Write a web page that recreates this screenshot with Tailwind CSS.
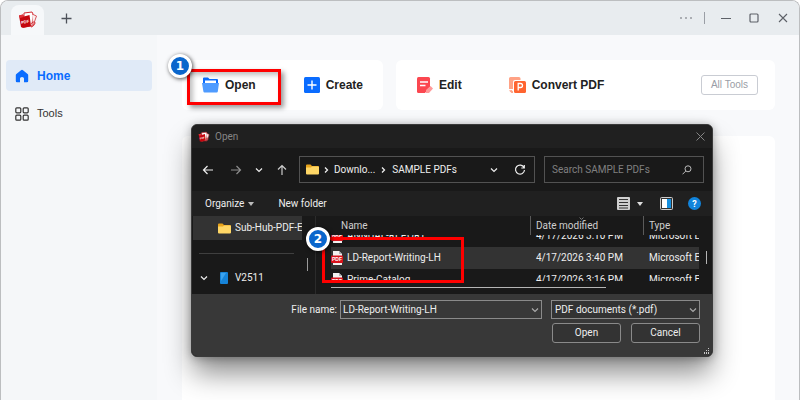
<!DOCTYPE html>
<html lang="en">
<head>
  <meta charset="UTF-8" />
  <meta name="viewport" content="width=device-width, initial-scale=1.0"/>
  <title>PDF Editor</title>
  <script src="https://cdn.jsdelivr.net/npm/@tailwindcss/browser@4"></script>
</head>
<body class="bg-white font-['Liberation_Sans',sans-serif] text-[#222]">
  <!-- shared icons -->
  <svg class="hidden">
    <symbol id="logo" viewBox="0 0 20 20">
      <path d="M6 3l8-1 1 2-1 12-8 1z" fill="#fff" stroke="#d22a31" stroke-width="1"/>
      <path d="M14 4l4.500 2-3.500 10" fill="#f8eeee" stroke="#dc555b" stroke-width="1"/>
      <path d="M1 5.500l4-1 1 2 5.500-1.500L13 16l-8 2L3 17z" fill="#c4070f"/>
      <path d="M1 5.500l4-1 .8 2.500-3.800 1z" fill="#e2343b"/>
      <path d="M13 14c1-2 4-3 4-1s-3 4-4 4" fill="none" stroke="#d22a31"/>
      <text x="3.500" y="14" font-size="4" font-weight="bold" fill="#fff" font-family="Liberation Sans" transform="rotate(-12 4 14)">PDF</text>
    </symbol>
    <symbol id="folder" viewBox="0 0 13 11">
      <path d="M0 1.500Q0 .5 1 .5h3.500l1.500 1.500h6q1 0 1 1V6H0z" fill="#e8a41c"/>
      <path d="M0 3.500h5l1-1h6q1 0 1 1v6q0 1-1 1H1q-1 0-1-1z" fill="#ffd766"/>
    </symbol>
    <symbol id="pdf" viewBox="0 0 12 14">
      <path d="M2 0h6l3 3v11H2z" fill="#f1f1f1"/>
      <path d="M8 0v3h3z" fill="#b5b5b5"/>
      <rect y="4.500" width="12" height="7.500" rx="1" fill="#d8121c"/>
      <text x="6" y="10.300" text-anchor="middle" font-size="5" font-weight="bold" fill="#fff" font-family="Liberation Sans">PDF</text>
    </symbol>
    <symbol id="chevron" viewBox="0 0 8 8"><path d="M1 2.500l3 3 3-3" fill="none" stroke="currentColor" stroke-width="1.200"/></symbol>
    <symbol id="chevron-right" viewBox="0 0 8 8"><path d="M3 1.500L5.500 4 3 6.500" fill="none" stroke="currentColor" stroke-width="1.300"/></symbol>
  </svg>

  <div class="relative min-h-screen overflow-hidden flex flex-col rounded-t-lg border border-b-0 border-[#bcbec0] bg-[#f8f9fb]">
    <header class="flex items-center h-[34px] pl-[10px] pr-[11px] bg-[#e8ecef]">
      <div class="self-end flex items-center justify-center w-[33px] h-[30px] rounded-t-lg bg-[#f6f8fa]">
        <svg class="w-5 h-5"><use href="#logo"/></svg>
      </div>
      <button aria-label="New tab" class="ml-[17px] text-[#4c5159]">
        <svg class="w-[11px] h-[11px]" viewBox="0 0 11 11"><path d="M5.500.5v10M.5 5.500h10" stroke="currentColor" stroke-width="1.300"/></svg>
      </button>
      <div class="ml-auto flex items-center text-[#5d6168]">
        <button aria-label="More"><svg class="w-3 h-3" viewBox="0 0 12 12" fill="currentColor"><circle cx="1" cy="6" r=".8"/><circle cx="6" cy="6" r=".8"/><circle cx="11" cy="6" r=".8"/></svg></button>
        <span class="w-px h-3 ml-3 mr-4 bg-[#9a9ea5]"></span>
        <button aria-label="Minimize"><svg class="w-[10px] h-[10px]" viewBox="0 0 10 10"><path d="M0 5.500h10" stroke="currentColor"/></svg></button>
        <button aria-label="Maximize" class="ml-[18px]"><svg class="w-[10px] h-[10px]" viewBox="0 0 10 10"><rect x="1" y="1" width="8" height="8" rx="1" fill="none" stroke="currentColor" stroke-width="1.200"/></svg></button>
        <button aria-label="Close" class="ml-[19px]"><svg class="w-[10px] h-[10px]" viewBox="0 0 10 10"><path d="M1 1l8 8M9 1l-8 8" stroke="currentColor" stroke-width="1.100"/></svg></button>
      </div>
    </header>

    <div class="flex flex-1">
      <nav class="w-[156px] shrink-0 pt-[25px] px-[5px] bg-[#f5f7f9]">
        <a href="#" class="flex items-center gap-2 h-[31px] px-[9px] rounded bg-[#e0eaf7] text-xs font-bold text-[#0a6cff]">
          <svg class="w-[14px] h-[14px]" viewBox="0 0 14 14"><path d="M7 .8q.5 0 1 .4l4.600 3.800q.6.500.6 1.300V12q0 1.200-1.200 1.200H9V9.500Q9 8 7 8T5 9.500v3.700H2Q.8 13.200.8 12V6.300q0-.8.6-1.300L6 1.200q.5-.4 1-.4z" fill="currentColor"/></svg>
          Home
        </a>
        <a href="#" class="flex items-center gap-2 h-[31px] mt-[7px] px-[9px] text-[11px] text-[#333]">
          <svg class="w-[14px] h-[14px]" viewBox="0 0 14 14" fill="none" stroke="currentColor" stroke-width="1.200"><rect x=".8" y=".8" width="5" height="5" rx="1"/><rect x="8.200" y=".8" width="5" height="5" rx="1"/><rect x=".8" y="8.200" width="5" height="5" rx="1"/><rect x="8.200" y="8.200" width="5" height="5" rx="1"/></svg>
          Tools
        </a>
      </nav>

      <main class="flex-1 flex flex-col pt-[25px] pl-[25px] pr-6">
        <div class="flex gap-[13px] h-[50px] text-xs font-bold">
          <section class="flex items-center w-[201px] px-5 rounded-md bg-white">
            <button class="flex items-center gap-[6px]">
              <svg class="w-[17px] h-[16px]" viewBox="0 0 17 16"><path d="M1 1.500Q1 .5 2 .5h4l1.500 1.500H15q1 0 1 1V8H1z" fill="#0a6cff"/><path d="M3 3.500h11v3H3z" fill="#fff"/><path d="M0 6h17l-1.200 8.500q-.1 1-1.100 1H2.500q-1 0-1.100-1z" fill="#4f9bff"/></svg>
              Open
            </button>
            <button class="flex items-center gap-[6px] ml-12">
              <svg class="w-4 h-4" viewBox="0 0 16 16"><rect width="16" height="16" rx="1.500" fill="#0a6cff"/><path d="M8 3.500v9M3.500 8h9" stroke="#fff" stroke-width="1.400"/></svg>
              Create
            </button>
          </section>
          <section class="flex-1 flex items-center pl-[21px] pr-[17px] rounded-md bg-white">
            <button class="flex items-center gap-[6px]">
              <svg class="w-4 h-4" viewBox="0 0 16 16"><path d="M0 1.500Q0 0 1.500 0h10Q13 0 13 1.500V10l-5 6H1.500Q0 16 0 14.500z" fill="#fb4750"/><path d="M3 5h8M3 8.500h5.500" stroke="#fff" stroke-width="1.300"/><path d="M9 13l4.500-4L16 11.500 12 16H9z" fill="#ff9a9a"/></svg>
              Edit
            </button>
            <button class="flex items-center gap-[6px] ml-[47px]">
              <svg class="w-[17px] h-4" viewBox="0 0 17 16"><path d="M0 1.500Q0 0 1.500 0H10q1.500 0 1.500 1.500V3H6Q4 3 4 5v7H0zM0 13.500L2.500 16H4v-1.500L2.500 13z" fill="#ffa285"/><rect x="5" y="4" width="12" height="12" rx="1.500" fill="#ff6430"/><path d="M9.200 13.500v-7h2.300q2 0 2 2t-2 2H9.200" fill="none" stroke="#fff" stroke-width="1.300"/></svg>
              Convert PDF
            </button>
            <button class="ml-auto h-5 px-[9px] rounded-[3px] border border-[#c9ccd3] text-[10px] font-normal text-[#9a9da6]">All Tools</button>
          </section>
        </div>
        <section class="flex-1 mt-[26px] rounded-t-md bg-white"></section>
      </main>
    </div>

    <!-- file picker -->
    <div role="dialog" aria-label="Open" class="absolute left-[190px] top-[123px] w-[522px] rounded-md overflow-hidden border border-[#3a3a3a] bg-[#191919] font-[Roboto,'Open_Sans',sans-serif] text-[10px] leading-4 text-[#eee] shadow-[0_18px_28px_-2px_rgba(0,0,0,0.45),0_1px_10px_rgba(0,0,0,0.3)]">
      <div class="flex items-center h-[23px] pl-[6px] pr-[7px] gap-[5px] bg-[#202020] text-[#858585]">
        <svg class="w-3 h-3"><use href="#logo"/></svg>
        <span>Open</span>
        <button aria-label="Close dialog" class="ml-auto"><svg class="w-[9px] h-[9px]" viewBox="0 0 9 9"><path d="M.5.5l8 8M8.500.5l-8 8" stroke="currentColor"/></svg></button>
      </div>

      <div class="flex items-center h-[43px] pl-[10px] pr-2">
        <button aria-label="Back"><svg class="w-3 h-3" viewBox="0 0 12 12"><path d="M11 6H1.500M5.500 2l-4 4 4 4" fill="none" stroke="#eee" stroke-width="1.200"/></svg></button>
        <button aria-label="Forward" class="ml-4"><svg class="w-3 h-3" viewBox="0 0 12 12"><path d="M1 6h9.500M6.500 2l4 4-4 4" fill="none" stroke="#8d8d8d" stroke-width="1.200"/></svg></button>
        <button aria-label="Recent locations" class="ml-[13px]"><svg class="w-2 h-2"><use href="#chevron"/></svg></button>
        <button aria-label="Up" class="ml-[13px]"><svg class="w-3 h-3" viewBox="0 0 12 12"><path d="M6 11V1.500M2 5.500l4-4 4 4" fill="none" stroke="#ccc" stroke-width="1.200"/></svg></button>
        <div class="flex items-center shrink-0 w-[236px] h-[27px] ml-[11px] pl-[6px] pr-2 border border-[#525252]">
          <svg class="w-[13px] h-[11px]"><use href="#folder"/></svg>
          <svg class="w-2 h-2 ml-[3px]"><use href="#chevron-right"/></svg>
          <span class="ml-1">Downlo...</span>
          <svg class="w-2 h-2 ml-1"><use href="#chevron-right"/></svg>
          <span class="ml-[5px]">SAMPLE PDFs</span>
          <button aria-label="Previous locations" class="ml-auto"><svg class="w-2 h-2"><use href="#chevron"/></svg></button>
          <button aria-label="Refresh" class="ml-4"><svg class="w-3 h-3" viewBox="0 0 12 12" fill="none" stroke="currentColor" stroke-width="1.200"><path d="M10 3.500A4.500 4.500 0 1 0 10.500 6M10.300 1v3H7.300"/></svg></button>
        </div>
        <label class="flex items-center flex-1 min-w-0 h-[27px] ml-[9px] pl-[7px] pr-[11px] border border-[#525252]">
          <input type="search" aria-label="Search" placeholder="Search SAMPLE PDFs" class="flex-1 min-w-0 bg-transparent outline-none placeholder:text-[#808080]"/>
          <svg class="w-[10px] h-[10px]" viewBox="0 0 10 10" fill="none" stroke="#bbb"><circle cx="6" cy="3.800" r="3"/><path d="M3.800 6L.5 9.300"/></svg>
        </label>
      </div>

      <div class="flex items-center h-[25px] pl-[13px] pr-[11px] bg-[#202020]">
        <button class="flex items-center gap-1">Organize <svg class="w-[6px] h-[4px]" viewBox="0 0 6 4"><path d="M0 0h6L3 4z" fill="#bbb"/></svg></button>
        <button class="ml-6">New folder</button>
        <button aria-label="View" class="ml-auto flex items-center gap-[7px]">
          <svg class="w-[13px] h-[13px]" viewBox="0 0 13 13"><rect width="13" height="13" rx="1" fill="#cfcfcf"/><path d="M2 2.500h9M2 5.500h9M2 8.500h9M2 11h9" stroke="#333"/></svg>
          <svg class="w-[6px] h-[4px]" viewBox="0 0 6 4"><path d="M0 0h6L3 4z" fill="#ddd"/></svg>
        </button>
        <button aria-label="Preview pane" class="ml-[17px]"><svg class="w-[13px] h-[13px]" viewBox="0 0 13 13"><rect x=".5" y=".5" width="12" height="12" rx="1" fill="#333" stroke="#ccc"/><path d="M2 2h5v9H2z" fill="#fff"/><path d="M7 2h4v9H7z" fill="#1590e0"/></svg></button>
        <button aria-label="Help" class="ml-[15px]"><svg class="w-[13px] h-[13px]" viewBox="0 0 13 13"><circle cx="6.500" cy="6.500" r="6.500" fill="#1184dc"/><text x="6.500" y="10" text-anchor="middle" font-size="9" font-weight="bold" fill="#fff">?</text></svg></button>
      </div>

      <div class="flex h-[78px]">
        <div class="flex w-[124px] pl-px border-r border-[#2b2b2b]">
          <div class="w-[109px]">
            <div class="flex items-center gap-1 h-6 pl-[25px] overflow-hidden whitespace-nowrap bg-[#333]">
              <svg class="w-[13px] h-[11px] shrink-0"><use href="#folder"/></svg>
              <span>Sub-Hub-PDF-E</span>
            </div>
            <div class="h-px mt-[13px] ml-[6px] mr-2 bg-[#3f3f3f]"></div>
            <div class="flex items-center h-6 mt-3 pl-[7px]">
              <svg class="w-2 h-2"><use href="#chevron"/></svg>
              <svg class="w-2 h-3 ml-3" viewBox="0 0 8 12"><rect width="8" height="12" rx="1" fill="#1683d8"/><path d="M1 1h5L1 9z" fill="#3aa2ee"/></svg>
              <span class="ml-[7px]">V2511</span>
            </div>
          </div>
          <div class="w-px h-[13px] mt-[42px] ml-[5px] bg-[#9a9a9a]"></div>
        </div>

        <div class="flex-1 min-w-0 pl-[15px]">
          <div class="flex">
            <table class="block w-[368px] text-left whitespace-nowrap">
              <thead class="block text-[#cfcfcf]">
                <tr class="grid grid-cols-[199px_113px_1fr] h-[19px]">
                  <th class="pl-[10px] pt-[2px] font-normal">Name</th>
                  <th class="relative pl-[5px] pt-[2px] border-l border-[#5a5a5a] font-normal">Date modified
                    <svg class="absolute left-[47px] top-0 w-[7px] h-[5px] text-[#999]"><use href="#chevron"/></svg>
                  </th>
                  <th class="pl-[5px] pt-[2px] border-l border-[#5a5a5a] font-normal">Type</th>
                </tr>
              </thead>
              <!-- list is scrolled halfway between rows -->
              <tbody class="flex flex-col justify-center h-[46px] overflow-hidden">
                <tr class="grid grid-cols-[199px_113px_1fr] items-center shrink-0 h-[22px]">
                  <td class="flex items-center gap-1"><svg class="w-3 h-[14px]"><use href="#pdf"/></svg>ANNUAL-REPORT</td>
                  <td class="pl-[6px]">4/17/2026 3:10 PM</td>
                  <td class="pl-[6px] overflow-hidden">Microsoft Ec</td>
                </tr>
                <tr class="grid grid-cols-[199px_113px_1fr] items-center shrink-0 h-[22px] bg-[#333]">
                  <td class="flex items-center gap-1"><svg class="w-3 h-[14px]"><use href="#pdf"/></svg>LD-Report-Writing-LH</td>
                  <td class="pl-[6px]">4/17/2026 3:40 PM</td>
                  <td class="pl-[6px] overflow-hidden">Microsoft Ec</td>
                </tr>
                <tr class="grid grid-cols-[199px_113px_1fr] items-center shrink-0 h-[22px]">
                  <td class="flex items-center gap-1"><svg class="w-3 h-[14px]"><use href="#pdf"/></svg>Prime-Catalog</td>
                  <td class="pl-[6px]">4/17/2026 3:16 PM</td>
                  <td class="pl-[6px] overflow-hidden">Microsoft Ec</td>
                </tr>
              </tbody>
            </table>
            <div class="w-px h-[13px] mt-[35px] ml-[7px] bg-[#b5b5b5]"></div>
          </div>
          <div class="w-[275px] h-px mt-[6px] bg-[#b5b5b5]"></div>
        </div>
      </div>

      <form class="h-[62px] pt-[6px] pr-3 bg-[#383838]">
        <div class="flex items-center">
          <label for="file-name" class="w-[145px] text-right">File name:</label>
          <div class="relative flex-1 ml-[3px]">
            <input id="file-name" type="text" value="LD-Report-Writing-LH" class="block w-full h-[19px] px-[2px] border border-[#8a8a8a] bg-[#383838] outline-none"/>
            <svg class="absolute right-[3px] top-[6px] w-2 h-2 text-[#aaa]"><use href="#chevron"/></svg>
          </div>
          <div class="relative w-[149px] ml-[9px]">
            <select aria-label="File type" class="block w-full h-[19px] px-[3px] appearance-none border border-[#8a8a8a] bg-[#333]">
              <option>PDF documents (*.pdf)</option>
            </select>
            <svg class="pointer-events-none absolute right-[3px] top-[6px] w-2 h-2 text-[#aaa]"><use href="#chevron"/></svg>
          </div>
        </div>
        <div class="flex justify-end gap-[10px] mt-1">
          <button type="button" class="w-[69px] h-5 rounded-[3px] border border-[#8a8a8a] bg-[#333]">Open</button>
          <button type="button" class="w-[69px] h-5 rounded-[3px] border border-[#8a8a8a] bg-[#333]">Cancel</button>
        </div>
      </form>
      <svg class="absolute right-[2px] bottom-px w-[7px] h-[7px]" viewBox="0 0 7 7" fill="#c8c8c8"><path d="M5 0h1v1H5zM5 2h1v1H5zM5 4h1v2H5zM3 2h1v1H3zM3 4h1v2H3zM1 4h1v2H1z"/></svg>
    </div>

    <!-- step markers -->
    <div class="absolute left-[186px] top-[68px] w-[94px] h-[36px] border-3 border-[#f00] shadow-[3px_3px_5px_rgba(0,0,0,0.4),inset_3px_3px_5px_rgba(0,0,0,0.25)]"></div>
    <div class="absolute left-[167px] top-[53px] flex items-center justify-center size-6 rounded-full border-3 border-white bg-[#0a66cc] font-['DejaVu_Sans',sans-serif] text-xs font-bold text-white shadow-[1px_1px_4px_rgba(0,0,0,0.7)]">1</div>
    <div class="absolute left-[321px] top-[236px] w-[142px] h-[46px] border-3 border-[#f00]"></div>
    <div class="absolute left-[305px] top-[226px] flex items-center justify-center size-6 rounded-full border-3 border-white bg-[#0a66cc] font-['DejaVu_Sans',sans-serif] text-xs font-bold text-white shadow-[1px_1px_4px_rgba(0,0,0,0.7)]">2</div>
  </div>
</body>
</html>
